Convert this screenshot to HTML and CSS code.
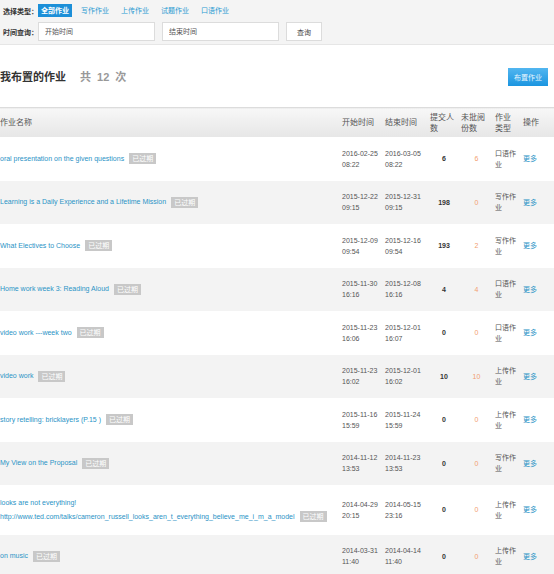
FILE: index.html
```html
<!DOCTYPE html>
<html lang="zh-CN">
<head>
	<meta charset="UTF-8">
	<meta name="viewport" content="width=device-width">
	<title>我布置的作业</title>
	<link rel="stylesheet" href="styles.css">
</head>
<body>
<!-- filter bar -->
<div class="filter">
	<div class="frow">
		<span class="flabel">选择类型：</span>
		<a class="tab on">全部作业</a>
		<a class="tab">写作作业</a>
		<a class="tab">上传作业</a>
		<a class="tab">试题作业</a>
		<a class="tab">口语作业</a>
	</div>
	<div class="frow mn5">
		<span class="flabel">时间查询：</span>
		<input class="tb" type="text" placeholder="开始时间">
		<input class="tb" type="text" placeholder="结束时间">
		<button class="btn">查询</button>
	</div>
</div>
<div class="main">
	<div class="titlebar">
		<h2 class="title">我布置的作业<span class="count">共 12 次</span></h2>
		<button class="btn-add">布置作业</button>
	</div>
	<table class="hwtbl">
		<colgroup>
			<col style="width:342px"><col style="width:43px"><col style="width:45px"><col style="width:31px"><col style="width:34px"><col style="width:28px"><col style="width:34px">
		</colgroup>
		<thead>
			<tr><th>作业名称</th><th>开始时间</th><th>结束时间</th><th>提交人<br>数</th><th>未批阅<br>份数</th><th>作业<br>类型</th><th>操作</th></tr>
		</thead>
		<tbody id="hwlist"></tbody>
	</table>
</div>
<script>
var homework = [
	["oral presentation on the given questions", "2016-02-25 08:22", "2016-03-05 08:22", 6, 6, "口语作业"],
	["Learning is a Daily Experience and a Lifetime Mission", "2015-12-22 09:15", "2015-12-31 09:15", 198, 0, "写作作业"],
	["What Electives to Choose", "2015-12-09 09:54", "2015-12-16 09:54", 193, 2, "写作作业"],
	["Home work week 3: Reading Aloud", "2015-11-30 16:16", "2015-12-08 16:16", 4, 4, "口语作业"],
	["video work ---week two", "2015-11-23 16:06", "2015-12-01 16:07", 0, 0, "口语作业"],
	["video work", "2015-11-23 16:02", "2015-12-01 16:02", 10, 10, "上传作业"],
	["story retelling: bricklayers (P.15 )", "2015-11-16 15:59", "2015-11-24 15:59", 0, 0, "上传作业"],
	["My View on the Proposal", "2014-11-12 13:53", "2014-11-23 13:53", 0, 0, "写作作业"],
	["looks are not everything!<br>http://www.ted.com/talks/cameron_russell_looks_aren_t_everything_believe_me_i_m_a_model", "2014-04-29 20:15", "2014-05-15 23:16", 0, 0, "上传作业"],
	["on music", "2014-03-31 11:40", "2014-04-14 11:40", 0, 0, "上传作业"]
];
var html = "";
for (var i = 0; i < homework.length; i++) {
	var h = homework[i];
	// item[name, start, end, submitted, unreviewed, type]
	html += "<tr>"
		+ "<td class='name'><a>" + h[0] + "</a><span class='badge'>已过期</span></td>"
		+ "<td class='date'>" + h[1] + "</td>"
		+ "<td class='date'>" + h[2] + "</td>"
		+ "<td class='num'>" + h[3] + "</td>"
		+ "<td class='unread'>" + h[4] + "</td>"
		+ "<td class='type'>" + h[5] + "</td>"
		+ "<td><a class='more'>更多</a></td>"
		+ "</tr>";
}
document.getElementById("hwlist").innerHTML = html;
</script>
</body>
</html>
```

FILE: styles.css
```css
*{margin:0;padding:0;box-sizing:border-box;}
body{background:#fff;font-family:"Liberation Sans", "Noto Sans CJK SC", sans-serif;color:#555;}
a{cursor:pointer;}
.mn5{margin-top:5px;}

/* filter bar */
.filter{background:#f4f4f4;height:45px;padding:4px 0 0 3px;border-bottom:1px solid #e6e6e6;}
.frow{display:flex;align-items:center;}
.flabel{font-size:7px;font-weight:bold;color:#333;width:35px;}
.tab{font-size:7px;line-height:13px;height:13px;padding:0 3px;margin-right:6px;color:#2a9ad2;}
.tab.on{background:#1c8fd8;color:#fff;font-weight:bold;}
.tb{width:117px;height:19px;margin-right:7px;padding:0 6px;border:1px solid #dcdcdc;background:#fff;font-size:7px;font-family:inherit;color:#555;outline:none;}
.tb::placeholder{color:#555;}
.btn{width:36px;height:19px;border:1px solid #dcdcdc;background:#fff;font-size:7px;font-family:inherit;color:#444;}

/* title */
.main{margin-left:-3px;}
.titlebar{display:flex;justify-content:space-between;padding:22px 6px 0 3px;height:62px;align-items:flex-start;}
.title{font-size:11px;line-height:21px;font-weight:bold;color:#333;}
.count{margin-left:14px;color:#999;word-spacing:3px;}
.btn-add{margin-top:1px;width:40px;height:18px;border:none;background:linear-gradient(#52b6f0,#1b95e0);color:#e8f6ff;font-size:7px;font-family:inherit;}

/* table */
.hwtbl{width:557px;table-layout:fixed;border-collapse:collapse;}
.hwtbl th{font-size:8px;font-weight:normal;line-height:11px;padding:3.5px 0 3.5px 3px;text-align:left;color:#555;background:linear-gradient(#f7f7f7,#e6e6e6);border-top:1px solid #dcdcdc;}
.hwtbl td{font-size:7px;line-height:11px;padding:10.75px 0 10.75px 3px;vertical-align:middle;color:#555;}
#hwlist tr:nth-child(even){background:#f3f3f3;}
.name{line-height:14px !important;}
.name a{color:#2b93c6;}
.badge{display:inline-block;margin-left:5px;padding:0 3px;height:11px;line-height:11px;background:#c8c8c8;color:#fff;font-size:7px;vertical-align:middle;}
.date{color:#555;}
.num{text-align:center;font-weight:bold;color:#333 !important;}
.unread{text-align:center;color:#f2a070 !important;}
.type{color:#555;}
.more{color:#2b93c6;}
```
